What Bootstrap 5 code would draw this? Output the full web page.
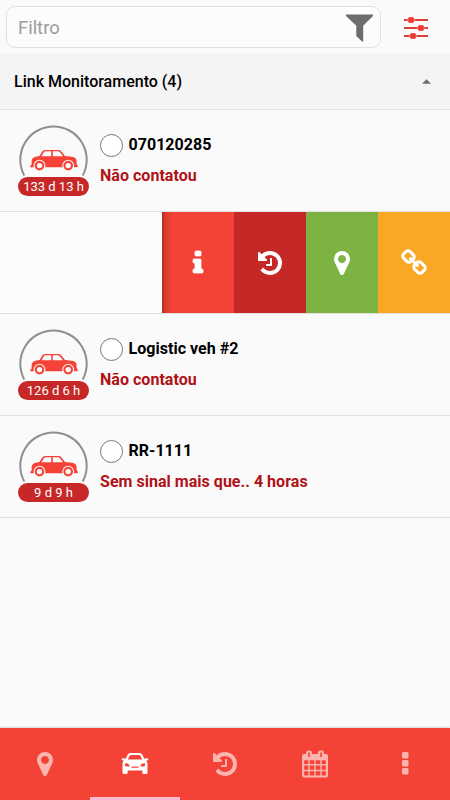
<!DOCTYPE html>
<html lang="pt-BR">
<head>
<meta charset="utf-8">
<meta name="viewport" content="width=device-width, initial-scale=1">
<title>Link Monitoramento</title>
<link href="https://cdn.jsdelivr.net/npm/bootstrap@5.3.0/dist/css/bootstrap.min.css" rel="stylesheet">
<style>
  body { font-family: Roboto, "Liberation Sans", sans-serif; background: #fafafa; color: #000; }
  svg { display: block; flex: none; }
  .app { height: 800px; overflow: hidden; }
  .topbar { height: 53px; padding: 6px 0 5px 6px; }
  .filter-box { width: 375px; height: 42px; border: 1px solid #e0e0e0; border-radius: 9px; padding: 2px 7px 0 11px; background: #fcfcfc; }
  .filter-box input { font-size: 18.4px; color: #777; outline: 0; }
  .filter-box input::placeholder { color: #9b9b9b; opacity: 1; }
  .tune { margin: 2px 0 0 22px; }
  .group-head { height: 57px; background: #f4f4f4; border-bottom: 1px solid #e4e4e4; padding: 1px 19px 0 14px; font-size: 16px; font-weight: 500; }
  .vehicle { height: 102px; border-bottom: 1px solid #e0e0e0; padding-left: 18px; }
  .avatar { width: 71px; height: 72px; margin-top: 15px; }
  .ring { left: 1px; top: 0; }
  .age { left: 0; bottom: 1px; width: 71px; height: 19px; border-radius: 10px; background: #c62828; color: #fff; font-size: 13px; line-height: 19px; }
  .details { padding: 24px 0 0 11px; }
  .dot { width: 23px; height: 23px; border: 1px solid #777; border-radius: 50%; background: #fff; margin-right: 5.5px; }
  .vname { font-size: 16px; font-weight: 700; line-height: 21px; padding-bottom: 2px; letter-spacing: .03px; }
  .vstate { font-size: 16px; font-weight: 700; line-height: 20px; margin-top: 9px; color: #b01217; letter-spacing: .03px; }
  .swiped { height: 102px; border-bottom: 1px solid #e0e0e0; background: #fcfcfc; }
  .action { width: 72px; height: 101px; color: #fff; }
  .a-info { background: linear-gradient(90deg, #a92c22 0, #d93a2f 3px, #f44336 10px); }
  .a-hist { background: #c62828; }
  .a-pin { background: #7cb342; }
  .a-link { background: #f9a825; }
  .tabs { height: 72px; background: #f44336; color: #fbb4ae; box-shadow: 0 -1px 2px rgba(0,0,0,.15); }
  .tab { height: 72px; border-bottom: 3px solid transparent; padding-top: 3px; color: inherit; }
  .tab.on { color: #fff; border-color: #f8bbd0; }
</style>
<script src="https://cdn.jsdelivr.net/npm/bootstrap@5.3.0/dist/js/bootstrap.bundle.min.js"></script>
</head>
<body>
<svg width="0" height="0" class="position-absolute" aria-hidden="true">
  <defs>
    <symbol id="i-pin" viewBox="0 0 1792 1792"><path d="M1152 640q0-106-75-181t-181-75-181 75-75 181 75 181 181 75 181-75 75-181zm256 0q0 109-33 179l-364 774q-16 33-47.5 52t-67.5 19-67.5-19-46.5-52l-365-774q-33-70-33-179 0-212 150-362t362-150 362 150 150 362z"/></symbol>
    <symbol id="i-history" viewBox="0 0 1792 1792"><path d="M1664 896q0 156-61 298t-164 245-245 164-298 61q-172 0-327-72.5t-264-204.5q-7-10-6.5-22.5t8.5-20.5l137-138q10-9 25-9 16 2 23 12 73 95 179 147t225 52q104 0 198.5-40.5t163.5-109.5 109.5-163.5 40.5-198.5-40.5-198.5-109.5-163.5-163.5-109.5-198.5-40.5q-98 0-188 35.5t-160 101.5l137 138q31 30 14 69-17 40-59 40h-448q-26 0-45-19t-19-45v-448q0-42 40-59 39-17 69 14l130 129q107-101 244.5-156.5t284.5-55.5q156 0 298 61t245 164 164 245 61 298zm-640-288v448q0 14-9 23t-23 9h-320q-14 0-23-9t-9-23v-64q0-14 9-23t23-9h224v-352q0-14 9-23t23-9h64q14 0 23 9t9 23z"/></symbol>
    <symbol id="i-info" viewBox="0 0 1792 1792"><path stroke="currentColor" stroke-width="50" d="M1216 1344v128q0 26-19 45t-45 19h-512q-26 0-45-19t-19-45v-128q0-26 19-45t45-19h64v-384h-64q-26 0-45-19t-19-45v-128q0-26 19-45t45-19h384q26 0 45 19t19 45v576h64q26 0 45 19t19 45zm-128-1152v192q0 26-19 45t-45 19h-256q-26 0-45-19t-19-45v-192q0-26 19-45t45-19h256q26 0 45 19t19 45z"/></symbol>
    <symbol id="i-link" viewBox="0 0 1792 1792"><path d="M1520 1216q0-40-28-68l-208-208q-28-28-68-28-42 0-72 32 3 3 19 18.5t21.5 21.5 15 19 13 25.5 3.5 27.5q0 40-28 68t-68 28q-15 0-27.5-3.5t-25.5-13-19-15-21.5-21.5-18.5-19q-33 31-33 73 0 40 28 68l206 207q27 27 68 27 40 0 68-26l147-146q28-28 28-67zm-703-705q0-40-28-68l-206-207q-28-28-68-28-39 0-68 27l-147 146q-28 28-28 67 0 40 28 68l208 208q27 27 68 27 42 0 72-31-3-3-19-18.5t-21.5-21.5-15-19-13-25.5-3.5-27.5q0-40 28-68t68-28q15 0 27.5 3.5t25.5 13 19 15 21.5 21.5 18.5 19q33-31 33-73zm895 705q0 120-85 203l-147 146q-83 83-203 83-121 0-204-85l-206-207q-83-83-83-203 0-123 88-209l-88-88q-86 88-208 88-120 0-204-84l-208-208q-84-84-84-204t85-203l147-146q83-83 203-83 121 0 204 85l206 207q83 83 83 203 0 123-88 209l88 88q86-88 208-88 120 0 204 84l208 208q84 84 84 204z"/></symbol>
    <!-- side-view saloon inside an open ring -->
    <symbol id="i-vehicle" viewBox="0 0 69 69">
      <path d="M5.300 50.500A33.200 33.200 0 1 1 63.700 50.500" fill="none" stroke="#8f8f8f" stroke-width="2"/>
      <g transform="translate(0 1.200)">
      <path fill="#f44336" fill-rule="evenodd" d="M11.300 39.500L12.600 38.500V35.500C12.600 33 13.800 31.200 16.500 30.500L20.500 29.800L23.200 25.400Q24.200 23.800 26 23.800H39.500Q41.300 23.800 42.400 25.200L46 29.800L53 30.600Q57.300 31.200 57.600 34.500V38L58.700 39V40.700L57 41H11.300ZM22.500 30H32.200V25H26.600Q25.500 25 24.900 26ZM33.800 30H44L40.900 26Q40.100 25 38.900 25H33.800Z"/>
      <g fill="#f44336" stroke="#fafafa" stroke-width="1.100"><circle cx="20.500" cy="39.400" r="5.400"/><circle cx="49.200" cy="39.400" r="5.400"/></g>
      <g fill="#fafafa"><circle cx="20.500" cy="39.400" r="2.700"/><circle cx="49.200" cy="39.400" r="2.700"/></g>
      </g>
    </symbol>
  </defs>
</svg>

<div class="app d-flex flex-column">
  <header class="topbar d-flex align-items-center">
    <div class="filter-box d-flex align-items-center">
      <input type="text" class="border-0 bg-transparent p-0 flex-grow-1" placeholder="Filtro" aria-label="Filtro">
      <svg width="27" height="28" viewBox="0 0 27 28" fill="#6d6d6d"><path d="M0 .5H27V2L17.200 11.800V27.500H16L10.300 22V11.800L0 2Z"/></svg>
    </div>
    <svg class="tune" width="26" height="24" viewBox="0 0 26 24">
      <path d="M1 4H25M1 12H25M1 20H25" stroke="#d9403a" stroke-width="1.900"/>
      <g fill="#ee392f" stroke="#fafafa" stroke-width=".5"><rect x="4.900" y=".9" width="6.400" height="6.200" rx="1.500"/><rect x="14.700" y="8.900" width="6.400" height="6.200" rx="1.500"/><rect x="6.800" y="16.900" width="6.400" height="6.200" rx="1.500"/></g>
    </svg>
  </header>

  <div class="group-head d-flex align-items-center justify-content-between">
    <span>Link Monitoramento (4)</span>
    <svg width="9" height="5" viewBox="0 0 10 5" fill="#6e6e6e"><path d="M0 5L5 0L10 5Z"/></svg>
  </div>

  <main class="flex-grow-1">
    <div class="vehicle d-flex">
      <div class="avatar position-relative"><svg class="ring position-absolute" width="69" height="69"><use href="#i-vehicle"/></svg><div class="age position-absolute text-center">133 d 13 h</div></div>
      <div class="details"><div class="d-flex align-items-center"><span class="dot"></span><span class="vname">070120285</span></div><div class="vstate">Não contatou</div></div>
    </div>
    <div class="swiped d-flex justify-content-end">
      <div class="action a-info d-flex align-items-center justify-content-center"><svg width="28" height="28" fill="currentColor"><use href="#i-info"/></svg></div>
      <div class="action a-hist d-flex align-items-center justify-content-center"><svg width="28" height="28" fill="currentColor"><use href="#i-history"/></svg></div>
      <div class="action a-pin d-flex align-items-center justify-content-center"><svg width="28" height="28" fill="currentColor"><use href="#i-pin"/></svg></div>
      <div class="action a-link d-flex align-items-center justify-content-center"><svg width="28" height="28" fill="currentColor"><use href="#i-link"/></svg></div>
    </div>
    <div class="vehicle d-flex">
      <div class="avatar position-relative"><svg class="ring position-absolute" width="69" height="69"><use href="#i-vehicle"/></svg><div class="age position-absolute text-center">126 d 6 h</div></div>
      <div class="details"><div class="d-flex align-items-center"><span class="dot"></span><span class="vname">Logistic veh #2</span></div><div class="vstate">Não contatou</div></div>
    </div>
    <div class="vehicle d-flex">
      <div class="avatar position-relative"><svg class="ring position-absolute" width="69" height="69"><use href="#i-vehicle"/></svg><div class="age position-absolute text-center">9 d 9 h</div></div>
      <div class="details"><div class="d-flex align-items-center"><span class="dot"></span><span class="vname">RR-1111</span></div><div class="vstate">Sem sinal mais que.. 4 horas</div></div>
    </div>
  </main>

  <nav class="tabs row g-0 flex-nowrap">
    <a class="tab col d-flex align-items-center justify-content-center"><svg width="28" height="28" fill="currentColor"><use href="#i-pin"/></svg></a>
    <a class="tab on col d-flex align-items-center justify-content-center">
      <svg width="28" height="28" viewBox="0 0 28 28" fill="currentColor" fill-rule="evenodd"><path d="M.8 9.400Q.4 9 .8 8.600Q2.700 8 4.800 8.800L6.300 5.200Q7.300 3 9.700 3H18.300Q20.700 3 21.700 5.200L23.200 8.800Q25.300 8 27.200 8.600Q27.600 9 27.200 9.400Q26.600 10.600 25.200 10.600Q26.500 11.800 26.500 14V22.500Q26.500 24 25 24H22.800Q21.300 24 21.300 22.500V20.500H6.700V22.500Q6.700 24 5.200 24H3Q1.500 24 1.500 22.500V14Q1.500 11.800 2.800 10.600Q1.400 10.600 .8 9.400ZM6.800 9.500H21.200L19.400 5.800Q19 5 18 5H10Q9 5 8.600 5.800ZM4 13.500V15.200Q4 16.500 5.300 16.500H8.500Q8.500 14.500 7 13.800Q5.300 13 4 13.500ZM24 13.500V15.200Q24 16.500 22.700 16.500H19.500Q19.500 14.500 21 13.800Q22.700 13 24 13.500ZM10.500 16.500V17.700H17.500V16.500Z"/></svg>
    </a>
    <a class="tab col d-flex align-items-center justify-content-center"><svg width="28" height="28" fill="currentColor"><use href="#i-history"/></svg></a>
    <a class="tab col d-flex align-items-center justify-content-center">
      <svg width="28" height="28" viewBox="0 0 28 28" fill="currentColor" fill-rule="evenodd"><path d="M3 4H5V3Q5 .5 7.500 .5H8.500Q11 .5 11 3V4H17V3Q17 .5 19.500 .5H20.500Q23 .5 23 3V4H25Q27 4 27 6V25.500Q27 27.500 25 27.500H3Q1 27.500 1 25.500V6Q1 4 3 4ZM7.200 2.500V7H8.800V2.500ZM19.200 2.500V7H20.800V2.500ZM3.200 10.200V14H7.300V10.200ZM8.700 10.200V14H13.300V10.200ZM14.700 10.200V14H19.300V10.200ZM20.700 10.200V14H24.800V10.200ZM3.200 15.500V19.800H7.300V15.500ZM8.700 15.500V19.800H13.300V15.500ZM14.700 15.500V19.800H19.300V15.500ZM20.700 15.500V19.800H24.800V15.500ZM3.200 21.300V25.600H7.300V21.300ZM8.700 21.300V25.600H13.300V21.300ZM14.700 21.300V25.600H19.300V21.300ZM20.700 21.300V25.600H24.800V21.300Z"/></svg>
    </a>
    <a class="tab col d-flex align-items-center justify-content-center">
      <svg width="28" height="28" viewBox="0 0 28 28" fill="currentColor"><rect x="11" y="2" width="6.500" height="6.500" rx="1.500"/><rect x="11" y="10" width="6.500" height="6.500" rx="1.500"/><rect x="11" y="18" width="6.500" height="6.500" rx="1.500"/></svg>
    </a>
  </nav>
</div>
</body>
</html>
